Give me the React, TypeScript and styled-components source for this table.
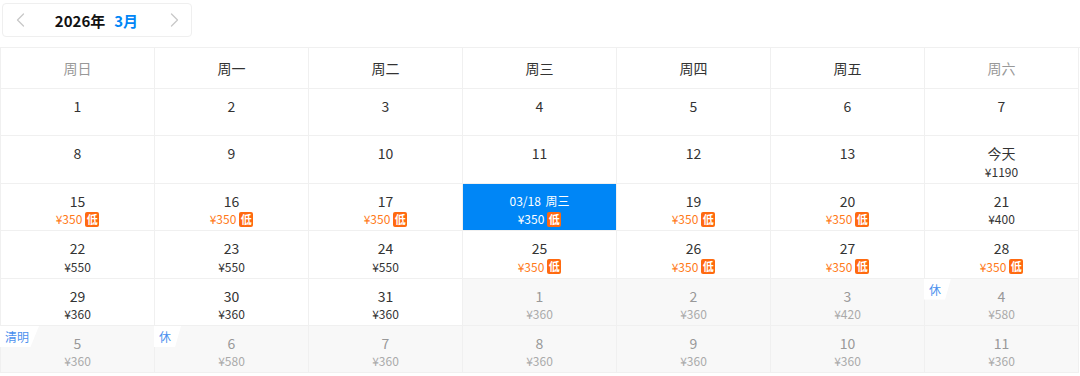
import React from "react";
import styled, { createGlobalStyle } from "styled-components";

const Global = createGlobalStyle`
  html, body { margin: 0; padding: 0; background: #fff; }
  body { font-family: "Noto Sans CJK SC", "Noto Sans", sans-serif; color: #333; }
`;

const Page = styled.div`
  width: 1080px;
  height: 376px;
  overflow: hidden;
  display: flex;
  flex-direction: column;
  padding-top: 3px;
  box-sizing: border-box;
`;

const MonthBar = styled.div`
  margin-left: 2px;
  width: 190px;
  height: 34px;
  box-sizing: border-box;
  border: 1px solid #efefef;
  border-radius: 4px;
  display: flex;
  align-items: center;
  justify-content: space-between;
  padding: 0 12px 0 13px;
`;

const Arrow = styled.span`
  display: flex;
  align-items: center;
  color: #c8c8c8;
`;

const MonthTitle = styled.div`
  display: flex;
  gap: 9px;
  font-size: 15px;
  font-weight: 700;
  color: #111;
  margin-right: 2px;
`;

const MonthBlue = styled.span`
  color: #0086f6;
`;

const Grid = styled.div`
  margin-top: 10px;
  display: grid;
  grid-template-columns: repeat(7, 154px);
  grid-template-rows: 41px repeat(6, 47.4px);
  border-top: 1px solid #f0f0f0;
  border-left: 1px solid #f0f0f0;
  width: 1079px;
`;

const HeadCell = styled.div<{ $weekend?: boolean }>`
  border-right: 1px solid #f0f0f0;
  border-bottom: 1px solid #f0f0f0;
  display: flex;
  align-items: center;
  justify-content: center;
  font-size: 14px;
  color: ${(p) => (p.$weekend ? "#999" : "#333")};
`;

const DayCell = styled.div<{ $other?: boolean; $selected?: boolean }>`
  position: relative;
  border-right: 1px solid #f0f0f0;
  border-bottom: 1px solid #f0f0f0;
  display: flex;
  flex-direction: column;
  align-items: center;
  padding-top: 7px;
  box-sizing: border-box;
  background: ${(p) => (p.$selected ? "#0086f6" : p.$other ? "#f8f8f8" : "#fff")};
  color: ${(p) => (p.$selected ? "#fff" : p.$other ? "#999" : "#333")};
`;

const DayNum = styled.div<{ $small?: boolean }>`
  font-size: ${(p) => (p.$small ? "12px" : "14px")};
  line-height: 20px;
  height: 20px;
  word-spacing: 2px;
`;

const PriceRow = styled.div`
  display: flex;
  align-items: center;
  gap: 3px;
  height: 17px;
`;

const Price = styled.span<{ $tone: "low" | "normal" | "other" | "selected" }>`
  font-size: 12px;
  line-height: 16px;
  color: ${(p) =>
    p.$tone === "low" ? "#ff7a1a" : p.$tone === "selected" ? "#fff" : p.$tone === "other" ? "#aaa" : "#333"};
`;

const LowTag = styled.span`
  display: inline-flex;
  align-items: center;
  justify-content: center;
  width: 14px;
  height: 15px;
  border-radius: 2px;
  background: #ff6a10;
  color: #fff;
  font-size: 11px;
  font-weight: 700;
  line-height: 1;
`;

const Holiday = styled.span`
  position: absolute;
  top: 0;
  left: -1px;
  height: 21px;
  padding: 0 10px 0 5px;
  display: flex;
  align-items: center;
  background: #fff;
  color: #4a90ee;
  font-size: 12px;
  clip-path: polygon(0 0, 100% 0, 78% 100%, 0 100%);
`;

type Day = {
  d: string;
  price?: string;
  low?: boolean;
  other?: boolean;
  selected?: boolean;
  tag?: string;
};

const days: Day[] = [
  { d: "1" }, { d: "2" }, { d: "3" }, { d: "4" }, { d: "5" }, { d: "6" }, { d: "7" },
  { d: "8" }, { d: "9" }, { d: "10" }, { d: "11" }, { d: "12" }, { d: "13" }, { d: "今天", price: "¥1190" },
  { d: "15", price: "¥350", low: true }, { d: "16", price: "¥350", low: true }, { d: "17", price: "¥350", low: true },
  { d: "03/18 周三", price: "¥350", low: true, selected: true },
  { d: "19", price: "¥350", low: true }, { d: "20", price: "¥350", low: true }, { d: "21", price: "¥400" },
  { d: "22", price: "¥550" }, { d: "23", price: "¥550" }, { d: "24", price: "¥550" },
  { d: "25", price: "¥350", low: true }, { d: "26", price: "¥350", low: true }, { d: "27", price: "¥350", low: true },
  { d: "28", price: "¥350", low: true },
  { d: "29", price: "¥360" }, { d: "30", price: "¥360" }, { d: "31", price: "¥360" },
  { d: "1", price: "¥360", other: true }, { d: "2", price: "¥360", other: true }, { d: "3", price: "¥420", other: true },
  { d: "4", price: "¥580", other: true, tag: "休" },
  { d: "5", price: "¥360", other: true, tag: "清明" }, { d: "6", price: "¥580", other: true, tag: "休" },
  { d: "7", price: "¥360", other: true }, { d: "8", price: "¥360", other: true }, { d: "9", price: "¥360", other: true },
  { d: "10", price: "¥360", other: true }, { d: "11", price: "¥360", other: true },
];

const weekdays = ["周日", "周一", "周二", "周三", "周四", "周五", "周六"];

const Chevron = ({ dir }: { dir: "left" | "right" }) => (
  <svg width="9" height="14" viewBox="0 0 9 14" fill="none">
    <path
      d={dir === "left" ? "M7.5 1 L1.5 7 L7.5 13" : "M1.5 1 L7.5 7 L1.5 13"}
      stroke="currentColor"
      strokeWidth="1.3"
      strokeLinecap="round"
      strokeLinejoin="round"
    />
  </svg>
);

export default function App() {
  return (
    <Page>
      <Global />
      <MonthBar>
        <Arrow><Chevron dir="left" /></Arrow>
        <MonthTitle>
          <span>2026年</span>
          <MonthBlue>3月</MonthBlue>
        </MonthTitle>
        <Arrow><Chevron dir="right" /></Arrow>
      </MonthBar>
      <Grid>
        {weekdays.map((w, i) => (
          <HeadCell key={w} $weekend={i === 0 || i === 6}>{w}</HeadCell>
        ))}
        {days.map((day, i) => {
          const tone = day.selected ? "selected" : day.low ? "low" : day.other ? "other" : "normal";
          return (
            <DayCell key={i} $other={day.other} $selected={day.selected}>
              {day.tag && <Holiday>{day.tag}</Holiday>}
              <DayNum $small={day.selected}>{day.d}</DayNum>
              {day.price && (
                <PriceRow>
                  <Price $tone={tone}>{day.price}</Price>
                  {day.low && <LowTag>低</LowTag>}
                </PriceRow>
              )}
            </DayCell>
          );
        })}
      </Grid>
    </Page>
  );
}
